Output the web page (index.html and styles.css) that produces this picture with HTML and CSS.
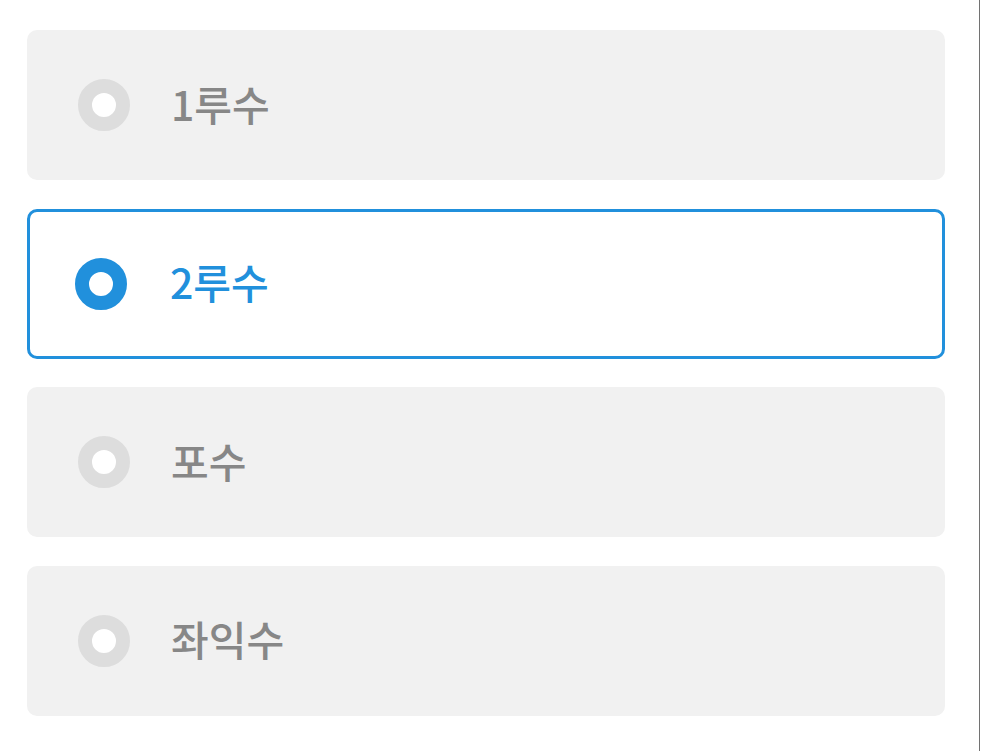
FILE: index.html
```
<!DOCTYPE html>
<html lang="ko">
	<head>
		<meta charset="utf-8">
		<title>포지션 선택</title>
		<link rel="stylesheet" href="styles.css">
	</head>
	<body>
		<div class="page">
			<div class="options" role="radiogroup">
				<label class="option">
					<input type="radio" name="pos" value="1b">
					<span class="dot"></span>
					<span class="name">1루수</span>
				</label>
				<label class="option selected">
					<input type="radio" name="pos" value="2b" checked>
					<span class="dot"></span>
					<span class="name">2루수</span>
				</label>
				<label class="option">
					<input type="radio" name="pos" value="c">
					<span class="dot"></span>
					<span class="name">포수</span>
				</label>
				<label class="option">
					<input type="radio" name="pos" value="lf">
					<span class="dot"></span>
					<span class="name">좌익수</span>
				</label>
			</div>
		</div>
	</body>
</html>
```
FILE: styles.css
```
html, body {
	margin:0;
	padding:0;
	background-color:white;
}
body {
	font-family:"Noto Sans CJK KR", "Noto Sans", sans-serif;
}
.page {
	width:980px;
	height:751px;
	border-right:1.5px solid #727272;
	box-sizing:border-box;
	padding:30px 0 0 27px;
}
.options {
	display:flex;
	flex-direction:column;
	gap:28.5px;
	width:918px;
}
.option {
	display:flex;
	align-items:center;
	height:150px;
	box-sizing:border-box;
	padding-left:51px;
	background-color:#f1f1f1;
	border-radius:10px;
	cursor:pointer;
}
.option input {
	display:none;
}
.dot {
	width:52px;
	height:52px;
	box-sizing:border-box;
	border-radius:50%;
	border:14.5px solid #dddddd;
	background-color:white;
	flex:none;
}
.name {
	margin-left:41px;
	margin-bottom:4px;
	font-size:41px;
	font-weight:500;
	line-height:1;
	color:#878787;
}

/* checked one */
.option.selected {
	background-color:white;
	border:3px solid #2190dc;
	padding-left:45px;
}
.option.selected .dot {
	border-color:#2190dc;
}
.option.selected .name {
	margin-left:43px;
	color:#2190dc;
}
```
